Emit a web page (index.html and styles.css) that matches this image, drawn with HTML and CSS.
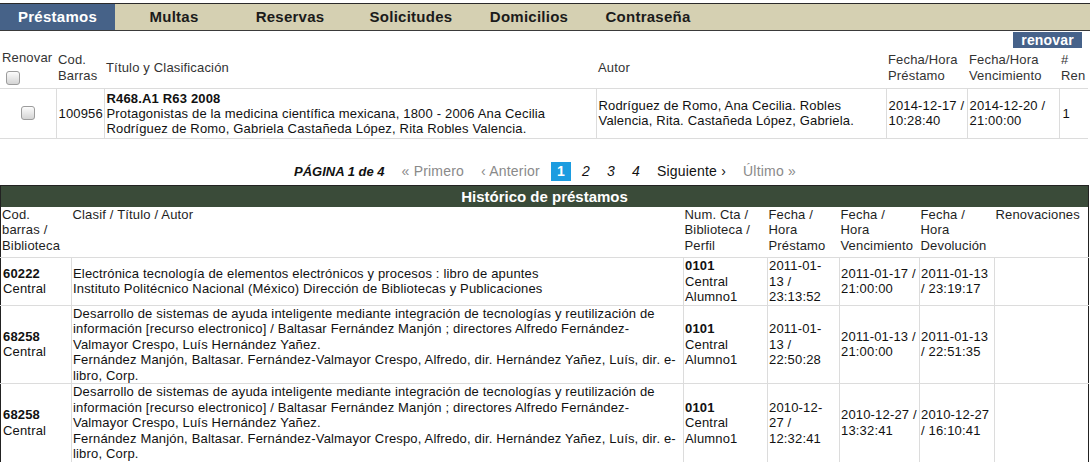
FILE: index.html
```html
<!DOCTYPE html>
<html lang="es">
<head>
<meta charset="utf-8">
<title>Préstamos</title>
<link rel="stylesheet" href="styles.css">
</head>
<body>
<nav class="tabs">
  <a class="tab active">Préstamos</a>
  <a class="tab">Multas</a>
  <a class="tab">Reservas</a>
  <a class="tab">Solicitudes</a>
  <a class="tab">Domicilios</a>
  <a class="tab">Contraseña</a>
</nav>

<div class="actions"><button class="btn-renovar">renovar</button></div>

<table class="loans">
  <colgroup>
    <col class="w56"><col class="w48"><col class="w492"><col class="w290"><col class="w81"><col class="w92"><col class="w29">
  </colgroup>
  <thead>
    <tr>
      <th>Renovar<input type="checkbox" class="chk chk-head"></th>
      <th>Cod.<br>Barras</th>
      <th>Título y Clasificación</th>
      <th>Autor</th>
      <th>Fecha/Hora<br>Préstamo</th>
      <th>Fecha/Hora<br>Vencimiento</th>
      <th>#<br>Ren</th>
    </tr>
  </thead>
  <tbody>
    <tr>
      <td class="center"><input type="checkbox" class="chk"></td>
      <td>100956</td>
      <td><b>R468.A1 R63 2008</b><br>Protagonistas de la medicina científica mexicana, 1800 - 2006 Ana Cecilia<br>Rodríguez de Romo, Gabriela Castañeda López, Rita Robles Valencia.</td>
      <td>Rodríguez de Romo, Ana Cecilia. Robles<br>Valencia, Rita. Castañeda López, Gabriela.</td>
      <td>2014-12-17 /<br>10:28:40</td>
      <td>2014-12-20 /<br>21:00:00</td>
      <td>1</td>
    </tr>
  </tbody>
</table>

<nav class="pager">
  <span class="pg pg-label">PÁGINA 1 de 4</span>
  <a class="pg muted">« Primero</a>
  <a class="pg muted">‹ Anterior</a>
  <a class="pg current">1</a>
  <a class="pg num">2</a>
  <a class="pg num">3</a>
  <a class="pg num">4</a>
  <a class="pg">Siguiente ›</a>
  <a class="pg muted">Último »</a>
</nav>

<table class="history">
  <colgroup>
    <col class="w71"><col class="w612"><col class="w84"><col class="w72"><col class="w80"><col class="w75"><col class="w94">
  </colgroup>
  <thead>
    <tr><th colspan="7" class="hist-title">Histórico de préstamos</th></tr>
    <tr class="hist-head">
      <th>Cod.<br>barras /<br>Biblioteca</th>
      <th>Clasif / Título / Autor</th>
      <th>Num. Cta /<br>Biblioteca /<br>Perfil</th>
      <th>Fecha /<br>Hora<br>Préstamo</th>
      <th>Fecha /<br>Hora<br>Vencimiento</th>
      <th>Fecha /<br>Hora<br>Devolución</th>
      <th>Renovaciones</th>
    </tr>
  </thead>
  <tbody>
    <tr>
      <td><b>60222</b><br>Central</td>
      <td>Electrónica tecnología de elementos electrónicos y procesos : libro de apuntes<br>Instituto Politécnico Nacional (México) Dirección de Bibliotecas y Publicaciones</td>
      <td><b>0101</b><br>Central<br>Alumno1</td>
      <td>2011-01-<br>13 /<br>23:13:52</td>
      <td>2011-01-17 /<br>21:00:00</td>
      <td>2011-01-13<br>/ 23:19:17</td>
      <td></td>
    </tr>
    <tr>
      <td><b>68258</b><br>Central</td>
      <td>Desarrollo de sistemas de ayuda inteligente mediante integración de tecnologías y reutilización de<br>información [recurso electronico] / Baltasar Fernández Manjón ; directores Alfredo Fernández-<br>Valmayor Crespo, Luís Hernández Yañez.<br>Fernández Manjón, Baltasar. Fernández-Valmayor Crespo, Alfredo, dir. Hernández Yañez, Luís, dir. e-<br>libro, Corp.</td>
      <td><b>0101</b><br>Central<br>Alumno1</td>
      <td>2011-01-<br>13 /<br>22:50:28</td>
      <td>2011-01-13 /<br>21:00:00</td>
      <td>2011-01-13<br>/ 22:51:35</td>
      <td></td>
    </tr>
    <tr>
      <td><b>68258</b><br>Central</td>
      <td>Desarrollo de sistemas de ayuda inteligente mediante integración de tecnologías y reutilización de<br>información [recurso electronico] / Baltasar Fernández Manjón ; directores Alfredo Fernández-<br>Valmayor Crespo, Luís Hernández Yañez.<br>Fernández Manjón, Baltasar. Fernández-Valmayor Crespo, Alfredo, dir. Hernández Yañez, Luís, dir. e-<br>libro, Corp.</td>
      <td><b>0101</b><br>Central<br>Alumno1</td>
      <td>2010-12-<br>27 /<br>12:32:41</td>
      <td>2010-12-27 /<br>13:32:41</td>
      <td>2010-12-27<br>/ 16:10:41</td>
      <td></td>
    </tr>
  </tbody>
</table>
</body>
</html>
```
FILE: styles.css
```css
body {
  margin: 0;
  font-family: "Liberation Sans", Arial, Helvetica, sans-serif;
  font-size: 13px;
  letter-spacing: 0.17px;
  color: #111;
  background: #fff;
}

/* ---------- tabs ---------- */
.tabs {
  margin-top: 3px;
  display: grid;
  grid-template-columns: 115px 118px 114px 128px 108px 130px;
  height: 26px;
  background: #d5d0b2;
  border-top: 1px solid #2a2a2a;
  border-bottom: 1px solid #3a3a3a;
}
.tab {
  font-weight: bold;
  font-size: 15px;
  letter-spacing: 0.25px;
  line-height: 26px;
  text-align: center;
  color: #1b1b1b;
}
.tab.active {
  background: #466288;
  color: #fff;
}

/* ---------- renovar ---------- */
.actions {
  display: flex;
  justify-content: flex-end;
  padding: 1px 8px 0 0;
}
.btn-renovar {
  background: #46628a;
  color: #fff;
  border: 0;
  font-family: "Liberation Sans", Arial, sans-serif;
  font-weight: bold;
  font-size: 14px;
  letter-spacing: 0.2px;
  line-height: 16px;
  height: 16px;
  padding: 0 8px;
}

/* ---------- current loans ---------- */
table {
  border-collapse: collapse;
  table-layout: fixed;
}
.loans { width: 1088px; }
.w56 { width: 56px; } .w48 { width: 48px; } .w492 { width: 492px; }
.w290 { width: 290px; } .w81 { width: 81px; } .w92 { width: 92px; } .w29 { width: 29px; }

.loans thead tr { height: 40px; }
.loans th {
  font-weight: normal;
  text-align: left;
  color: #333;
  padding: 0 1px 0 2px;
  vertical-align: middle;
  line-height: 16px;
  white-space: nowrap;
}
.loans td {
  border: 1px solid #dcdcdc;
  padding: 2px 1px 2px 2px;
  line-height: 15px;
  vertical-align: middle;
  white-space: nowrap;
}
.loans td:first-child { border-left: 0; }
.loans td:last-child { border-right: 0; padding-left: 3px; }
.center { text-align: center; }

.chk {
  appearance: none;
  -webkit-appearance: none;
  width: 14px;
  height: 14px;
  border: 1px solid #9c9c9c;
  border-radius: 3px;
  background: linear-gradient(#fcfcfc, #d4d4d4);
  margin: 0 auto;
  display: block;
}
.chk-head { margin: 5px 0 0 4px; }

/* ---------- pager ---------- */
.pager {
  display: flex;
  justify-content: center;
  align-items: center;
  gap: 5px;
  height: 19px;
  margin: 23px 0 4px;
}
.pg {
  padding: 0 6px;
  font-size: 14px;
  letter-spacing: 0.2px;
  line-height: 19px;
  color: #111;
}
.pg.muted { color: #8a8a8a; }
.pg.num { font-style: italic; }
.pg.current { background: #1c9ce0; color: #fff; font-weight: bold; }
.pg-label { font-size: 13px; font-weight: bold; font-style: italic; letter-spacing: 0; }

/* ---------- history ---------- */
.history {
  width: 1088px;
  border-top: 1px solid #222;
  border-left: 1px solid #222;
  border-right: 1px solid #222;
}
.w71 { width: 71px; } .w612 { width: 612px; } .w84 { width: 84px; }
.w72 { width: 72px; } .w80 { width: 80px; } .w75 { width: 75px; } .w94 { width: 94px; }

.hist-title {
  background: #3a4b39;
  color: #fff;
  font-weight: bold;
  font-size: 15px;
  letter-spacing: 0;
  height: 21px;
  line-height: 21px;
  padding: 0;
  text-align: center;
}
.hist-head th {
  font-weight: normal;
  text-align: left;
  vertical-align: top;
  color: #1e1e1e;
  padding: 0 0 4px 1px;
  line-height: 15.5px;
  white-space: nowrap;
}
.history td {
  border: 1px solid #dcdcdc;
  padding: 0 1px 0 1px;
  line-height: 15.5px;
  vertical-align: middle;
  white-space: nowrap;
}
.history td:first-child { border-left: 0; padding-left: 2px; }
.history td:last-child { border-right: 0; }
```
